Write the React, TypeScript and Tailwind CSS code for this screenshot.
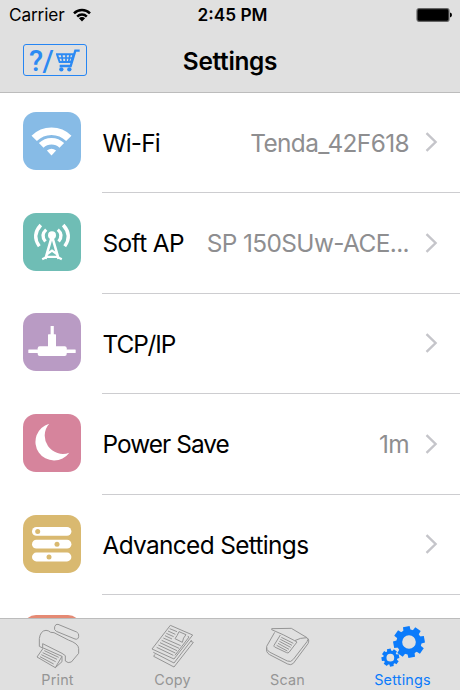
import type { ReactNode } from "react"

const WifiIcon = () => (
    <g fill="none" stroke="#fff">
        <path d="M11.2 26.4A24.6 24.6 0 0 1 45.8 26.4" strokeWidth="7.6" />
        <path d="M18.2 33.4A14.7 14.7 0 0 1 38.8 33.4" strokeWidth="6.6" />
        <path d="M23.9 38.6Q28.5 34.8 33.1 38.6L28.5 43.6Z" fill="#fff" stroke="none" />
    </g>
)

const AntennaIcon = () => (
    <g fill="none" stroke="#fff" strokeWidth="3">
        <circle cx="29" cy="22.3" r="4" fill="#fff" stroke="none" />
        <path d="M17.8 12Q8.4 22.5 16.3 33.2M40.2 12Q49.6 22.5 41.7 33.2" strokeWidth="3.4" />
        <path d="M23.2 16.6Q17.2 22 22.4 28.4M34.8 16.6Q40.8 22 35.6 28.4" strokeWidth="3.2" />
        <path d="M28.7 24L22.4 46M29.3 24L35.6 46" strokeWidth="2.6" />
        <path d="M23.5 41.5L29 37.5L34.5 41.5M19.2 46.2L24 43.8H34L38.8 46.2" strokeWidth="2.2" />
    </g>
)

const CableIcon = () => (
    <g fill="#fff">
        <rect x="27.6" y="13" width="3.2" height="10" />
        <rect x="25" y="21.3" width="8" height="13" rx="0.6" />
        <rect x="14.7" y="33.3" width="29" height="9.6" rx="2" />
        <rect x="5.3" y="36.5" width="47.4" height="3.6" rx="0.5" />
    </g>
)

const MoonIcon = () => (
    <path d="M26.2 9.7A18.7 18.7 0 1 0 46.3 38.7A18.2 18.2 0 0 1 26.2 9.7Z" fill="#fff" />
)

const SlidersIcon = () => (
    <g fill="#fff">
        <rect x="9" y="12" width="39.4" height="8.8" rx="4.4" />
        <rect x="9" y="24.8" width="39.4" height="8.8" rx="4.4" />
        <rect x="9" y="37.6" width="39.4" height="8.8" rx="4.4" />
        <g fill="#d9b970">
            <circle cx="14.7" cy="16.4" r="2.5" />
            <circle cx="34" cy="29.2" r="2.5" />
            <circle cx="26" cy="42" r="2.5" />
        </g>
    </g>
)

type Row = {
    label: string
    tracking?: string
    value?: string
    tile: string
    icon: ReactNode
}

const rows: Row[] = [
    {
        label: "Wi-Fi",
        tracking: "tracking-[-0.8px]",
        value: "Tenda_42F618",
        tile: "bg-[#87bbe6]",
        icon: <WifiIcon />
    },
    {
        label: "Soft AP",
        tracking: "tracking-[-0.6px]",
        value: "SP 150SUw-ACE...",
        tile: "bg-[#6fbdb5]",
        icon: <AntennaIcon />
    },
    {
        label: "TCP/IP",
        tracking: "tracking-[-1.1px]",
        tile: "bg-[#b99bc4]",
        icon: <CableIcon />
    },
    {
        label: "Power Save",
        tracking: "tracking-[-0.95px]",
        value: "1m",
        tile: "bg-[#d6849c]",
        icon: <MoonIcon />
    },
    {
        label: "Advanced Settings",
        tracking: "tracking-[-0.65px]",
        tile: "bg-[#d9b970]",
        icon: <SlidersIcon />
    },
    {
        label: "",
        tile: "bg-[#e58a74]",
        icon: null
    }
]

const teeth = [-10, 35, 80, 125, 170, 215, 260, 305]

const Gear = ({ cx, cy, r }: { cx: number; cy: number; r: number }) => (
    <g transform={`translate(${cx} ${cy}) scale(${r / 46})`}>
        <circle r="29" fill="none" stroke="currentColor" strokeWidth="17" />
        {teeth.map((a) => (
            <path key={a} d="M33 -11L47 -10V10L33 11Z" fill="currentColor" transform={`rotate(${a})`} />
        ))}
    </g>
)

const PrintIcon = () => (
    <svg width="44" height="46" viewBox="108 54 132 138" fill="none" stroke="currentColor" strokeWidth="3" strokeLinejoin="round">
        <path d="M174 58L230 81Q238 85 236 95Q234 105 225 102L169 79Q161 75 164 65Q167 56 174 58Z" />
        <path d="M128 129L118 124V101Q121 77 138 76Q145 76 152 82L162 83L205 105Q236 116 236 131V145L214 171Q204 176 196 168V152L186 145L128 116V129" />
        <path d="M130 129L186 154L166 188L111 156ZM186 154V170L166 188" />
        <path d="M133 137L176 157M128 143L171 163M124 149L167 170M120 155L161 177" />
    </svg>
)

const CopyIcon = () => (
    <svg width="44" height="46" viewBox="452 54 132 138" fill="none" stroke="currentColor" strokeWidth="3" strokeLinejoin="round">
        <path d="M510 61L577 90L521 162L455 132Z" />
        <path d="M464 148L460 154L521 186L579 112L571 109M459 142L521 174L574 105" />
        <path d="M536 80L557 89Q548 98 546 112L524 101Q531 92 536 80Z" />
        <path d="M508 71L530 80M503 78L525 88M498 85L520 95M494 92L515 102M489 99L541 122M484 106L536 130M479 113L530 137M474 120L525 144M469 127L519 151M562 94L566 96L524 151" />
    </svg>
)

const ScanIcon = () => (
    <svg width="44" height="46" viewBox="108 54 132 138" fill="none" stroke="currentColor" strokeWidth="3" strokeLinejoin="round">
        <path d="M125 71L184 70L231 98Q210 98 194 107Q160 88 125 74Z" />
        <path d="M134 82L110 124Q107 133 118 141L172 168Q183 173 190 163L231 110Q236 103 231 98" />
        <path d="M110 128Q107 142 119 149L173 177Q183 182 190 175L234 116Q238 108 235 101" />
        <path d="M151 90L132 121Q131 124 134 126L170 143Q174 145 177 142L201 111L194 107" />
        <path d="M154 97L190 115M151 103L186 121M148 109L182 127M144 115L177 133M140 121L172 138" />
    </svg>
)

const SettingsIcon = () => (
    <svg width="44" height="46" viewBox="451 54 132 138">
        <Gear cx={535} cy={111} r={46} />
        <Gear cx={479} cy={158} r={26} />
    </svg>
)

const tabs = [
    { label: "Print", icon: <PrintIcon />, color: "text-[#959595]" },
    { label: "Copy", icon: <CopyIcon />, color: "text-[#959595]" },
    { label: "Scan", icon: <ScanIcon />, color: "text-[#959595]" },
    { label: "Settings", icon: <SettingsIcon />, color: "text-[#0b7bfb]" }
]

function StatusBar() {
    return (
        <div className="grid h-[29px] grid-cols-3 items-center pl-[9px] pr-2 text-[17.25px] leading-[29px]">
            <div className="flex items-center gap-[8px]">
                <span className="tracking-[-0.15px]">Carrier</span>
                <svg width="18" height="14" viewBox="0 0 18 14" fill="none" stroke="#000" strokeWidth="2.5">
                    <path d="M1 5.3A11.4 11.4 0 0 1 17 5.3" />
                    <path d="M4.2 8.6A6.8 6.8 0 0 1 13.8 8.6" />
                    <path d="M5.9 10.3A4.4 4.4 0 0 1 12.1 10.3L9 13.4Z" fill="#000" stroke="none" />
                </svg>
            </div>
            <span className="pl-1 text-center font-semibold">2:45 PM</span>
            <svg className="justify-self-end" width="36" height="14" viewBox="0 0 36 14">
                <rect x="1" y="0.7" width="32" height="12.6" rx="2" fill="#000" stroke="#666" strokeWidth="1.2" />
                <path d="M34 4.6Q36 5 36 7T34 9.4Z" />
            </svg>
        </div>
    )
}

function NavBar() {
    return (
        <div className="grid flex-1 grid-cols-[64px_1fr_64px] items-center px-[23px] pb-0.5">
            <div className="flex h-8 w-[64px] items-center rounded-[3px] border-[1.5px] border-[#2585f3] pl-[5px] text-[#2c8af3]">
                <span className="w-[27px] pt-0.5 font-['Roboto',sans-serif] text-[29px] font-medium leading-8 tracking-[-0.5px]">?/</span>
                <svg className="mt-px shrink-0" width="24" height="23" viewBox="167 149 72 69" fill="none" stroke="currentColor" strokeWidth="5">
                    <path d="M238 154H225L211 200H178" strokeWidth="7" />
                    <path d="M170 165H220L212 188H178Z" strokeWidth="6" />
                    <path d="M184 165L187 188M197 165V188M209 165L205 188M173 176H217" strokeWidth="5" />
                    <circle cx="183" cy="210" r="6.5" fill="currentColor" stroke="none" />
                    <circle cx="207" cy="210" r="6.5" fill="currentColor" stroke="none" />
                </svg>
            </div>
            <h1 className="pt-0.5 text-center text-[24.4px] font-semibold leading-8 tracking-[-0.3px]">Settings</h1>
        </div>
    )
}

function SettingsRow({ row }: { row: Row }) {
    return (
        <li className="flex h-[100.6px] shrink-0 pl-[23px]">
            <div className={`mt-[19.9px] h-[58px] w-[58px] shrink-0 rounded-[13px] ${row.tile}`}>
                <svg width="58" height="58" viewBox="0 0 58 58">
                    {row.icon}
                </svg>
            </div>
            <div className="ml-[21px] flex flex-1 items-center border-b border-[#cdcdd0] pr-[22px] text-[24.4px]">
                <span className={`whitespace-nowrap pl-[0.5px] pt-[1.5px] ${row.tracking ?? ""}`}>{row.label}</span>
                <span className="ml-auto whitespace-nowrap pt-[1.5px] tracking-[-0.6px] text-[#8e8e90]">{row.value}</span>
                <svg className="ml-4 shrink-0" width="13" height="20" viewBox="0 0 13 20" fill="none" stroke="#c5c5ca" strokeWidth="2.4">
                    <path d="M1.5 1.2L10.6 10L1.5 18.8" />
                </svg>
            </div>
        </li>
    )
}

export default function App() {
    return (
        <div className="flex h-[690px] w-[460px] flex-col overflow-hidden bg-white font-['Inter',sans-serif] text-black">
            <header className="z-10 flex h-[93px] shrink-0 flex-col border-b border-[#bcbcbc] bg-[#e0e0e0]">
                <StatusBar />
                <NavBar />
            </header>

            <ul className="-mt-[0.7px] flex min-h-0 flex-1 flex-col overflow-hidden">
                {rows.map((row, i) => (
                    <SettingsRow key={i} row={row} />
                ))}
            </ul>

            <nav className="grid h-[72px] shrink-0 grid-cols-4 border-t border-[#bcbcbc] bg-[#e0e0e0]">
                {tabs.map((tab) => (
                    <div key={tab.label} className={`flex flex-col items-center pt-1 ${tab.color}`}>
                        {tab.icon}
                        <span className="pt-px text-[14.4px] leading-5 tracking-[0.2px]">{tab.label}</span>
                    </div>
                ))}
            </nav>
        </div>
    )
}
